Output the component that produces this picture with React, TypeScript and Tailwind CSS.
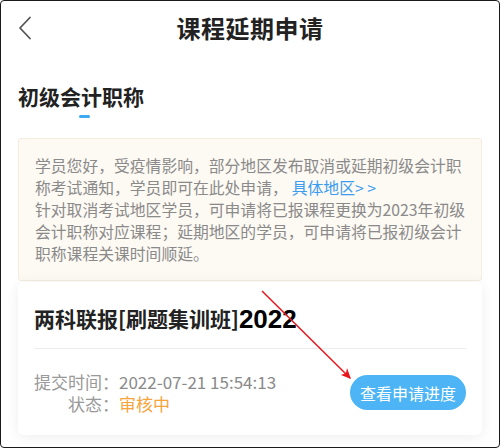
import React from 'react';

const cjk = "font-['Noto_Sans_CJK_SC',sans-serif]";

const App: React.FC = () => {
  return (
    <div className={`relative w-[500px] h-[448px] overflow-hidden rounded-[4px] border border-[#1a1a1a] bg-white ${cjk}`}>
      {/* Header */}
      <div className="relative flex h-[54px] items-center justify-center">
        <svg className="absolute left-[16px] top-[15px]" width="16" height="24" viewBox="0 0 16 24" fill="none">
          <path d="M13 1.5 L3 12 L13 22.5" stroke="#555" strokeWidth="1.8" strokeLinecap="round" strokeLinejoin="round" />
        </svg>
        <h1 className="text-[24px] font-bold leading-none text-[#222] tracking-[0.5px]">课程延期申请</h1>
      </div>

      {/* Tab */}
      <div className="mt-[27px] px-[17px]">
        <div className="inline-flex flex-col items-center">
          <span className="text-[21px] font-bold leading-[28px] text-[#222]">初级会计职称</span>
          <span className="mt-[5px] ml-[6px] h-[3px] w-[11px] rounded-full bg-[#3eaaf2]" />
        </div>
      </div>

      {/* Notice */}
      <div className="mx-[17px] mt-[20px] rounded-[3px] border border-[#f3ecdf] bg-[#fdf9f3] px-[16px] pt-[16px] pb-[15px] text-[15.8px] leading-[22px] text-[#8a8a8a]">
        <p className="whitespace-nowrap">学员您好，受疫情影响，部分地区发布取消或延期初级会计职</p>
        <p className="whitespace-nowrap">
          称考试通知，学员即可在此处申请，<span className="ml-[4px] text-[#3b9cf0]">具体地区&gt; &gt;</span>
        </p>
        <p className="whitespace-nowrap">针对取消考试地区学员，可申请将已报课程更换为2023年初级</p>
        <p className="whitespace-nowrap">会计职称对应课程；延期地区的学员，可申请将已报初级会计</p>
        <p className="whitespace-nowrap">职称课程关课时间顺延。</p>
      </div>

      {/* Card */}
      <div className="mx-[17px] mt-[1px] rounded-[6px] bg-white px-[16px] shadow-[0_2px_14px_rgba(0,0,0,0.07)]">
        <div className="flex h-[67px] items-center border-b border-[#ececec] pt-[8px]">
          <span className="text-[21px] font-bold text-[#222]">两科联报[刷题集训班]</span>
          <span className="font-['Liberation_Sans',sans-serif] text-[26px] font-bold text-black">2022</span>
        </div>
        <div className="flex items-center justify-between pt-[24px] pb-[23px]">
          <div className="flex flex-col gap-[5px] text-[17px] leading-[17px]">
            <div className="flex">
              <span className="w-[85px] text-right text-[#999]">提交时间：</span>
              <span className="text-[#8a8a8a]">2022-07-21 15:54:13</span>
            </div>
            <div className="flex">
              <span className="w-[85px] text-right text-[#999]">状态：</span>
              <span className="text-[#f7a43c]">审核中</span>
            </div>
          </div>
          <button className="h-[35px] rounded-full bg-[#4db4f5] px-[10px] text-[16px] text-white">
            查看申请进度
          </button>
        </div>
      </div>

      {/* Red annotation arrow */}
      <svg className="pointer-events-none absolute left-0 top-0" width="500" height="448">
        <line x1="261" y1="290" x2="349" y2="377" stroke="#e8151b" strokeWidth="1.5" />
        <path d="M350 378 L340 374 L345 372 L346 367 Z" fill="#e8151b" />
      </svg>
    </div>
  );
};

export default App;
